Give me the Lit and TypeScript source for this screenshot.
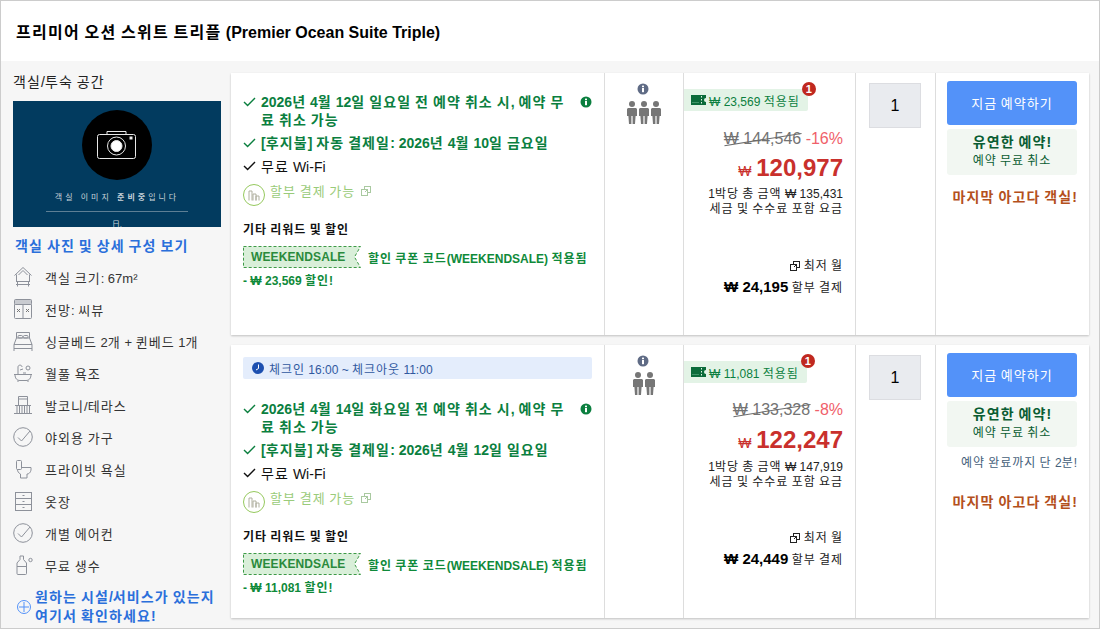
import { LitElement, html, css, svg } from "lit";
import { customElement } from "lit/decorators.js";

// The hangul in the reference is set on a full-em advance: widen hangul runs only.
const k = (s: string) =>
  s.split(/([가-힣]+)/).map((p, i) => (i % 2 ? html`<span class="k">${p}</span>` : p));

const ic = (body: unknown, w = 20, h = 20) =>
  html`<svg width=${w} height=${h} viewBox="0 0 ${w} ${h}" fill="none" stroke="#8d919a" stroke-width="1">${body}</svg>`;

const icons: Record<string, unknown> = {
  size: ic(svg`<path d="M1.500 9.500 10 1.500l8.500 8M3.500 8.500v6.500M16.500 8.500v6.500M5.500 9 10 4.500 14.500 9"/><path d="M3 15.500h14M3 18.500h14M4.500 15.500v5M15.500 15.500v5"/>`, 20, 22),
  view: ic(svg`<rect x=".5" y="5" width="17" height="14.500" rx="1"/><rect x=".5" y=".5" width="17" height="5" rx="1" fill="#c9cbd0"/><path d="M9 5v14.500"/><path d="M3 10l3 3M6 10l-3 3M12 10l3 3M15 10l-3 3" stroke="#777"/>`, 18, 20),
  bed: ic(svg`<path d="M3.500 7V1.500h13V7M1 13.500 3.500 7h13l2.500 6.500M1 13.500V20M19 13.500V20M1 13.500h18M1 17.500h18"/><rect x="5" y="4.500" width="4.500" height="2.500" rx="1"/><rect x="10.500" y="4.500" width="4.500" height="2.500" rx="1"/>`),
  bath: ic(svg`<path d="M1 11.500h18M2 11.500c0 4 2 6 5 6h6c3 0 5-2 5-6M5 11.500V4c0-2.500 4-2.500 4 0M7 7l3-1M5 17.500v1.500M15 17.500v1.500"/><circle cx="15" cy="5" r="2"/><path d="M10 10h3"/>`),
  balcony: ic(svg`<path d="M5.500 10V1.500h9V10M5.500 4h9M2 10.500h16M1 18.500h18M4 10.500v8M6.500 10.500v8M9 10.500v8M11.500 10.500v8M14 10.500v8M16.500 10.500v8"/>`),
  check: ic(svg`<circle cx="10" cy="10" r="9.300"/><path d="M5 10.500l3.500 3.500L17 4"/>`),
  toilet: ic(svg`<rect x="2.500" y=".5" width="5" height="9" rx="1"/><path d="M7.500 7.500h9.500c.5 4-1.500 6.500-4 6.500v4H6.500v-4c-2-1-3-2.500-3-4.500"/>`, 18, 19),
  closet: ic(svg`<rect x=".5" y=".5" width="16" height="18"/><path d="M.5 6.500h16M.5 12.500h16M7.500 3.500h2M7.500 9.500h2M7.500 15.500h2"/>`, 17, 19),
  water: ic(svg`<path d="M6 1h3.500v3.500l3 3.500v10.500a1 1 0 0 1-1 1H4a1 1 0 0 1-1-1V8l3-3.500zM3 11.500h9.500"/><circle cx="16.500" cy="5" r="1.700"/>`, 19, 21),
  plus: ic(svg`<circle cx="8" cy="8" r="6.500" stroke="#5392f9"/><path d="M8 3v10M3 8h10" stroke="#5392f9"/>`, 16, 16),
};

const Check = () =>
  html`<svg class="chk" width="13" height="10" viewBox="0 0 13 10" fill="none" stroke="currentColor" stroke-width="1.400"><path d="M1 5l3.600 3.600L12 1"/></svg>`;
const Info = (c: string) =>
  html`<svg width="12" height="12" viewBox="0 0 12 12"><circle cx="6" cy="6" r="5.500" fill=${c}/><rect x="5" y="5" width="2" height="4.200" fill="#fff"/><rect x="5" y="2.600" width="2" height="1.600" fill="#fff"/></svg>`;
const Ext = () =>
  html`<svg class="ext" width="10" height="10" viewBox="0 0 10 10" fill="none" stroke="currentColor"><rect x="3.500" y=".5" width="6" height="6"/><rect x=".5" y="3.500" width="6" height="6" fill="#fff"/><path d="M4 6l3-3"/></svg>`;
const Person = () =>
  html`<svg width="10" height="23" viewBox="0 0 10 23" fill="#767676"><circle cx="5" cy="3" r="3"/><path d="M1 7h8l1 1v7H8.600L8 23H5.600v-8H4.400v8H2l-.6-8H0V8z"/></svg>`;

const rooms = [
  {
    cls: "c1", guests: 3, banner: false,
    cancel: "2026년 4월 12일 일요일 전 예약 취소 시, 예약 무료 취소 가능",
    pay: "[후지불] 자동 결제일: 2026년 4월 10일 금요일",
    off: "23,569", old: "144,546", pct: "-16%", price: "120,977",
    total: "135,431", month: "24,195", hurry: false,
  },
  {
    cls: "c2", guests: 2, banner: true,
    cancel: "2026년 4월 14일 화요일 전 예약 취소 시, 예약 무료 취소 가능",
    pay: "[후지불] 자동 결제일: 2026년 4월 12일 일요일",
    off: "11,081", old: "133,328", pct: "-8%", price: "122,247",
    total: "147,919", month: "24,449", hurry: true,
  },
];

const amenities: [string, string][] = [
  ["size", "객실 크기: 67m²"],
  ["view", "전망: 씨뷰"],
  ["bed", "싱글베드 2개 + 퀸베드 1개"],
  ["bath", "월풀 욕조"],
  ["balcony", "발코니/테라스"],
  ["check", "야외용 가구"],
  ["toilet", "프라이빗 욕실"],
  ["closet", "옷장"],
  ["check", "개별 에어컨"],
  ["water", "무료 생수"],
];

@customElement("app-root")
export class AppRoot extends LitElement {
  static styles = css`
    :host {
      display: block;
      width: 1100px;
      height: 629px;
      box-sizing: border-box;
      border: 1px solid #ccc;
      background: #f6f6f6;
      overflow: hidden;
      font-family: "Liberation Sans", "Noto Sans CJK KR", sans-serif;
      color: #222;
      font-size: 12px;
    }
    .k { letter-spacing: .08em; }
    .head {
      height: 60px;
      background: #fff;
      display: flex;
      align-items: center;
      padding-left: 15px;
      font-size: 16px;
      font-weight: 700;
      color: #000;
    }
    .body { display: flex; }
    .side { width: 230px; flex: none; padding: 12px 0 0 12px; box-sizing: border-box; }
    .side h3 { margin: 0 0 9px; font-weight: 400; font-size: 14px; line-height: 19px; color: #222; }
    .photo {
      width: 208px; height: 126px; background: #023b5f; overflow: hidden;
      display: flex; flex-direction: column; align-items: center;
    }
    .circle {
      width: 70px; height: 70px; border-radius: 50%; background: #000; margin-top: 9px; flex: none;
      display: flex; align-items: center; justify-content: center;
    }
    .ph-text { margin-top: 12px; font-size: 8px; line-height: 12px; letter-spacing: 3px; color: #c8d3da; white-space: nowrap; }
    .ph-line { width: 142px; height: 1px; background: #5d7f95; margin-top: 7px; flex: none; }
    .ph-more { margin-top: 8px; font-size: 8px; line-height: 10px; color: #c8d3da; }
    .more { display: block; margin: 10px 0 5px 2px; font-size: 14px; line-height: 19px; font-weight: 700; color: #2a6fdb; }
    .am { display: flex; align-items: center; height: 32px; gap: 12px; font-size: 13px; color: #333; white-space: nowrap; }
    .am .i { width: 20px; display: flex; justify-content: center; flex: none; }
    .want {
      display: flex; align-items: center; gap: 3px; margin: 7px 0 0 3px;
      font-size: 14px; line-height: 19px; font-weight: 700; color: #2a6fdb; white-space: nowrap;
    }
    .want svg { flex: none; }
    .cards { flex: 1; padding: 12px 10px 0 0; display: flex; flex-direction: column; gap: 10px; }
    .card { display: flex; background: #fff; box-shadow: 0 1px 2px rgba(0,0,0,.22); }
    .c1 { height: 262px; }
    .c2 { height: 273px; }
    .cell { border-left: 1px solid #ddd; box-sizing: border-box; }
    .info { width: 373px; padding: 20px 12px 0; box-sizing: border-box; flex: none; }
    .banner {
      height: 22px; background: #e4edfc; border-radius: 2px; display: flex; align-items: center; gap: 5px;
      padding-left: 9px; margin: -8px 0 21px; color: #30589f; font-size: 12px;
    }
    .row { display: flex; gap: 5px; color: #0b7f3f; font-weight: 700; font-size: 14px; line-height: 18px; margin-bottom: 5px; align-items: flex-start; }
    .row .t { flex: 1; }
    .row .chk { margin-top: 4px; flex: none; }
    .row .ii { margin: 1px 0 0 9px; flex: none; }
    .wifi { color: #111; font-weight: 400; line-height: 20px; }
    .inst { display: flex; gap: 5px; color: #9acb7a; font-size: 13px; line-height: 16px; margin-top: 7px; }
    .inst .ic { width: 22px; height: 22px; border: 1px solid #96c95e; border-radius: 50%; box-sizing: border-box; flex: none; display: flex; align-items: center; justify-content: center; }
    .inst .ext { margin: 2px 0 0 1px; color: #a9c9a0; }
    .other { margin: 16px 0 7px; font-size: 12px; line-height: 17px; font-weight: 700; color: #111; }
    .coupon { display: flex; align-items: center; gap: 7px; color: #0f8a3a; font-weight: 700; font-size: 12px; white-space: nowrap; }
    .code { position: relative; width: 118px; height: 22px; flex: none; display: flex; align-items: center; padding-left: 8px; box-sizing: border-box; letter-spacing: .1px; color: #2a8a3c; }
    .code svg { position: absolute; left: 0; top: 0; }
    .code b { position: relative; font-size: 12px; }
    .save { margin-top: 5px; color: #0f8a3a; font-weight: 700; font-size: 12px; line-height: 16px; }
    .cap { width: 79px; flex: none; display: flex; flex-direction: column; align-items: center; padding-top: 10px; }
    .cap > svg { margin-left: -2px; }
    .cap .ppl { display: flex; gap: 2px; margin-top: 6px; }
    .c2 .cap .ppl { margin-top: 5px; }
    .price { width: 172px; flex: none; padding: 16px 12px 0 0; display: flex; flex-direction: column; align-items: flex-end; text-align: right; position: relative; }
    .tag {
      position: absolute; left: 0; top: 16px; height: 22px; background: #e3f3e6; border-radius: 0 2px 2px 0;
      display: flex; align-items: center; gap: 3px; padding: 0 8px 0 7px; color: #0b7f3f; font-size: 12px; white-space: nowrap;
    }
    .badge {
      position: absolute; right: -8px; top: -7px; width: 14px; height: 14px; border-radius: 50%;
      background: #c0281f; color: #fff; font-size: 11px; font-weight: 700; line-height: 14px; text-align: center;
    }
    .oldrow { margin-top: 39px; font-size: 16px; line-height: 20px; color: #737373; white-space: nowrap; }
    .c1 .oldrow { margin-top: 40px; }
    .old { position: relative; }
    .old::after { content: ""; position: absolute; left: 0; right: -1px; top: 50%; height: 1px; background: #6b6b6b; transform: rotate(-9deg); }
    .pct { color: #f0606a; }
    .now { margin-top: 6px; line-height: 28px; color: #c9302c; font-weight: 700; font-size: 24px; white-space: nowrap; }
    .c1 .now { margin-top: 5px; }
    .now i { font-style: normal; font-size: 14px; font-weight: 400; margin-right: -2px; }
    .tot { margin-top: 3px; font-size: 12px; line-height: 15px; color: #222; white-space: nowrap; }
    .c1 .tot { margin-top: 2px; }
    .low { margin-top: 41px; font-size: 12px; line-height: 16px; color: #222; display: flex; align-items: center; gap: 4px; }
    .c2 .low { margin-top: 40px; }
    .mon { margin-top: 3px; font-size: 12px; line-height: 20px; color: #222; white-space: nowrap; }
    .mon b { font-size: 15px; color: #000; }
    .qcell { width: 80px; flex: none; padding: 10px 0 0 13px; }
    .qty { width: 52px; height: 45px; box-sizing: border-box; background: #e9ebef; border: 1px solid #dcdde1; display: flex; align-items: center; justify-content: center; font-size: 16px; color: #000; }
    .act { flex: 1; padding: 8px 12px 0 11px; display: flex; flex-direction: column; }
    .btn { height: 44px; padding-bottom: 2px; box-sizing: border-box; background: #5392f9; border-radius: 3px; color: #fff; font-size: 13px; display: flex; align-items: center; justify-content: center; flex: none; white-space: nowrap; }
    .flex { margin-top: 4px; height: 46px; padding-bottom: 2px; box-sizing: border-box; background: #f2f7f2; border-radius: 3px; text-align: center; flex: none; display: flex; flex-direction: column; justify-content: center; }
    .flex b { font-size: 14px; line-height: 20px; color: #0a5d33; }
    .flex span.s { font-size: 12px; line-height: 18px; color: #0a5d33; }
    .hurry { text-align: right; margin-top: 8px; font-size: 12px; line-height: 16px; color: #44607a; white-space: nowrap; }
    .last { text-align: right; margin-top: 13px; font-size: 14px; line-height: 18px; font-weight: 700; color: #b4501c; white-space: nowrap; }
    .hurry + .last { margin-top: 22px; }
  `;

  render() {
    return html`
      <div class="head"><span>${k("프리미어 오션 스위트 트리플")} (Premier Ocean Suite Triple)</span></div>
      <div class="body">
        <div class="side">
          <h3>${k("객실/투숙 공간")}</h3>
          <div class="photo">
            <div class="circle">
              <svg width="40" height="30" viewBox="0 0 40 30" fill="none" stroke="#e8e8e8" stroke-width="1">
                <rect x=".5" y="4.500" width="38" height="24" rx="2"/>
                <path d="M10 4V1.500h19V4"/>
                <circle cx="19.500" cy="16" r="9"/>
                <circle cx="19.500" cy="16" r="5.500" fill="#fff"/>
                <rect x="33" y="7" width="2" height="2" fill="#fff"/>
              </svg>
            </div>
            <div class="ph-text">객실 이미지 <b>준비중</b>입니다</div>
            <div class="ph-line"></div>
            <div class="ph-more">日.</div>
          </div>
          <a class="more">${k("객실 사진 및 상세 구성 보기")}</a>
          ${amenities.map(([n, t]) => html`<div class="am"><span class="i">${icons[n]}</span><span>${k(t)}</span></div>`)}
          <div class="want">${icons.plus}<span>${k("원하는 시설/서비스가 있는지")}<br />${k("여기서 확인하세요!")}</span></div>
        </div>
        <div class="cards">${rooms.map((r) => this.card(r))}</div>
      </div>
    `;
  }

  card(r: (typeof rooms)[number]) {
    return html`
      <div class="card ${r.cls}">
        <div class="info">
          ${r.banner
            ? html`<div class="banner">
                <svg width="12" height="12" viewBox="0 0 12 12"><circle cx="6" cy="6" r="6" fill="#1c4fb0"/><path d="M6.500 2.500v4l-2.500 1.500" stroke="#fff" fill="none"/></svg>
                <span>${k("체크인 16:00 ~ 체크아웃 11:00")}</span>
              </div>`
            : ""}
          <div class="row">${Check()}<span class="t">${k(r.cancel)}</span><span class="ii">${Info("#0b7f3f")}</span></div>
          <div class="row">${Check()}<span class="t">${k(r.pay)}</span></div>
          <div class="row wifi">${Check()}<span class="t">${k("무료 Wi-Fi")}</span></div>
          <div class="inst">
            <div class="ic">
              <svg width="12" height="11" viewBox="0 0 12 11" fill="none" stroke="#b0b0a0"><path d="M1 10.500V1h3v9.500M5 10.500V4h3v6.500M8 10.500V6h3v4.500"/></svg>
            </div>
            <span>${k("할부 결제 가능")}</span>${Ext()}
          </div>
          <div class="other">${k("기타 리워드 및 할인")}</div>
          <div class="coupon">
            <div class="code">
              <svg width="118" height="22" viewBox="0 0 118 22"><path d="M.5.5h117l-6 10.500 6 10.500H.5z" fill="#d9efd9" stroke="#3d9a46" stroke-dasharray="3 2"/></svg>
              <b>WEEKENDSALE</b>
            </div>
            <span>${k("할인 쿠폰 코드(WEEKENDSALE) 적용됨")}</span>
          </div>
          <div class="save">- ₩ ${r.off} ${k("할인!")}</div>
        </div>
        <div class="cell cap">
          ${Info("#5f6b85")}
          <div class="ppl">${Array.from({ length: r.guests }, () => Person())}</div>
        </div>
        <div class="cell price">
          <div class="tag">
            <svg width="15" height="10" viewBox="0 0 15 10"><path d="M0 0h15v3a2 2 0 0 0 0 4v3H0z" fill="#0b6b3a"/><path d="M10.500 1v1.500M10.500 4v1.500M10.500 7v1.500" stroke="#e3f3e6"/><path d="M1 7.500h7" stroke="#3f9468"/></svg>
            <span>₩ ${r.off} ${k("적용됨")}</span>
            <span class="badge">1</span>
          </div>
          <div class="oldrow"><span class="old">₩ ${r.old}</span> <span class="pct">${r.pct}</span></div>
          <div class="now"><i>₩</i> ${r.price}</div>
          <div class="tot">${k("1박당 총 금액")} ₩ ${r.total}<br />${k("세금 및 수수료 포함 요금")}</div>
          <div class="low">${Ext()}<span>${k("최저 월")}</span></div>
          <div class="mon"><b>₩ ${r.month}</b> ${k("할부 결제")}</div>
        </div>
        <div class="cell qcell"><div class="qty">1</div></div>
        <div class="cell act">
          <div class="btn"><span>${k("지금 예약하기")}</span></div>
          <div class="flex"><b>${k("유연한 예약!")}</b><span class="s">${k("예약 무료 취소")}</span></div>
          ${r.hurry ? html`<div class="hurry">${k("예약 완료까지 단 2분!")}</div>` : ""}
          <div class="last">${k("마지막 아고다 객실!")}</div>
        </div>
      </div>
    `;
  }
}
